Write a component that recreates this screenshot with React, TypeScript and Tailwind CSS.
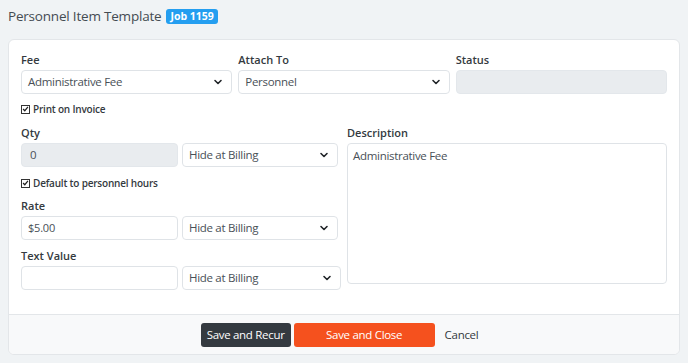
import { ChevronDown } from "lucide-react";

function Select({ value, className = "" }: { value: string; className?: string }) {
  return (
    <div
      className={`flex h-[24px] shrink-0 items-center justify-between rounded border border-[#dfe3e7] bg-white pl-[6px] pr-[7px] text-[11.5px] tracking-[-0.3px] text-[#495057] ${className}`}
    >
      <span>{value}</span>
      <ChevronDown size={12} strokeWidth={3.2} className="text-[#212529]" />
    </div>
  );
}

function Check({ label }: { label: string }) {
  return (
    <label className="flex h-[14px] items-center gap-[3px] text-[10px] font-semibold tracking-[-0.2px] text-[#343a40]">
      <span className="flex h-[9px] w-[9px] items-center justify-center border border-[#333] bg-white">
        <svg viewBox="0 0 10 10" className="h-[8px] w-[8px]">
          <path d="M1.5 5 L4 7.5 L8.5 2" fill="none" stroke="#222" strokeWidth="1.7" />
        </svg>
      </span>
      {label}
    </label>
  );
}

function Label({ children }: { children: string }) {
  return <div className="mb-[3px] h-[14px] text-[11px] font-semibold leading-[14px] text-[#343a40]">{children}</div>;
}

export default function App() {
  return (
    <div
      className="h-[363px] w-[688px] overflow-hidden bg-[#f0f3f5] px-2 pt-[6px]"
      style={{ fontFamily: '"Open Sans", "Noto Sans", sans-serif' }}
    >
      <div className="flex h-[20px] items-center gap-[5px]">
        <h1 className="text-[13.5px] tracking-[-0.2px] text-[#444b52]">Personnel Item Template</h1>
        <span className="rounded-[3px] bg-[#249ef0] px-[4px] text-[10.5px] font-bold leading-[15px] text-white">Job 1159</span>
      </div>

      <div className="mt-[13px] w-[672px] overflow-hidden rounded-md border border-[#e3e6e9] bg-white">
        <div className="h-[274px] px-[12px] pt-[13px]">
          <div className="grid grid-cols-3 gap-x-[6px]">
            <div>
              <Label>Fee</Label>
              <Select value="Administrative Fee" />
            </div>
            <div>
              <Label>Attach To</Label>
              <Select value="Personnel" />
            </div>
            <div>
              <Label>Status</Label>
              <div className="h-[24px] rounded border border-[#e3e7eb] bg-[#e9ecef]" />
            </div>
          </div>

          <div className="mt-[8px]">
            <Check label="Print on Invoice" />
          </div>

          <div className="mt-[10px] flex gap-[9px]">
            <div className="w-[317px] shrink-0">
              <Label>Qty</Label>
              <div className="flex gap-1">
                <div className="flex h-[24px] w-[157px] shrink-0 items-center rounded border border-[#e3e7eb] bg-[#e9ecef] px-2 text-[11.5px] text-[#495057]">
                  0
                </div>
                <Select value="Hide at Billing" className="w-[156px]" />
              </div>

              <div className="mt-[9px]">
                <Check label="Default to personnel hours" />
              </div>

              <div className="mt-[9px]">
                <Label>Rate</Label>
                <div className="flex gap-1">
                  <div className="flex h-[24px] w-[157px] shrink-0 items-center rounded border border-[#dfe3e7] bg-white px-[6px] text-[11px] tracking-[-0.2px] text-[#495057]">
                    $5.00
                  </div>
                  <Select value="Hide at Billing" className="w-[156px]" />
                </div>
              </div>

              <div className="mt-[9px]">
                <Label>Text Value</Label>
                <div className="flex gap-1">
                  <div className="h-[24px] w-[157px] shrink-0 rounded border border-[#dfe3e7] bg-white" />
                  <Select value="Hide at Billing" className="w-[159px]" />
                </div>
              </div>
            </div>

            <div className="flex-1">
              <Label>Description</Label>
              <div className="h-[141px] rounded border border-[#dfe3e7] bg-white px-[5px] py-[3px] text-[11.5px] tracking-[-0.3px] text-[#495057]">
                Administrative Fee
              </div>
            </div>
          </div>
        </div>

        <div className="flex h-[40px] items-center justify-center border-t border-[#e3e6e9] bg-[#f8f9fa] pr-[6px]">
          <div className="flex items-center gap-[3px]">
            <button className="h-[24px] w-[90px] whitespace-nowrap rounded-[3px] bg-[#343a40] text-[11.5px] tracking-[-0.3px] text-white">
              Save and Recur
            </button>
            <button className="h-[24px] w-[141px] whitespace-nowrap rounded-[3px] bg-[#f5511e] text-[11.5px] tracking-[-0.3px] text-white">
              Save and Close
            </button>
            <button className="ml-[4px] px-[3px] text-[11.5px] tracking-[-0.3px] text-[#343a40]">Cancel</button>
          </div>
        </div>
      </div>
    </div>
  );
}
